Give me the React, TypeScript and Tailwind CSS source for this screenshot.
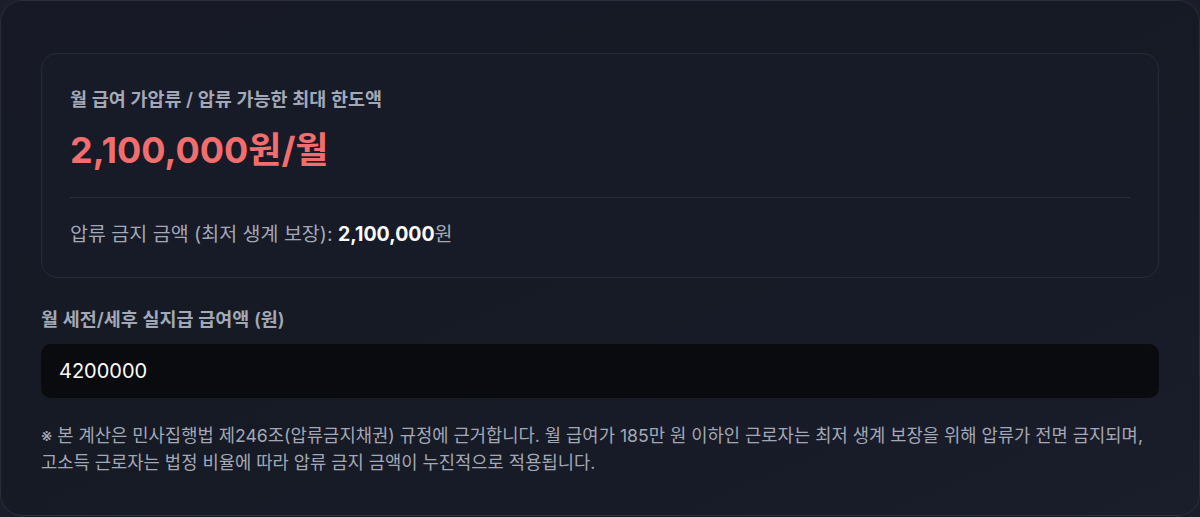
import React, { useState } from 'react';

const font = { fontFamily: 'Inter, "Noto Sans CJK KR", sans-serif' };

const App: React.FC = () => {
  const [salary, setSalary] = useState('4200000');

  return (
    <div className="min-h-screen bg-[#1b1e2a]" style={font}>
      <div className="h-[516px] rounded-[22px] border border-[#2a2e3c] bg-gradient-to-br from-[#171a26] via-[#161a25] to-[#1a1d2a] px-10 pt-[52px]">
        {/* result card */}
        <div className="rounded-2xl border border-[#272b39] bg-[#171a27] px-7 pt-[31px] pb-[29px]">
          <div className="text-[18.5px] font-semibold leading-7 text-[#a3a8b6]">
            월 급여 가압류 / 압류 가능한 최대 한도액
          </div>
          <div className="mt-[17px] text-[36px] font-bold leading-10 text-[#f26d6d]">
            2,100,000원/월
          </div>
          <div className="mt-[27px] border-t border-[#2a2e3c] pt-[22px] text-[19.5px] leading-7 text-[#a3a8b6]">
            압류 금지 금액 (최저 생계 보장):{' '}
            <span className="font-bold text-white">2,100,000</span>원
          </div>
        </div>

        <label className="mt-[27px] block text-[18.5px] font-semibold leading-7 text-[#a3a8b6]">
          월 세전/세후 실지급 급여액 (원)
        </label>
        <input
          value={salary}
          onChange={(e) => setSalary(e.target.value)}
          className="mt-[11px] block h-[54px] w-full rounded-[10px] bg-[#0a0b0e] px-[18px] text-xl text-white outline-none"
        />

        <p className="mt-6 break-keep text-[17.7px] leading-[27px] text-[#a3a8b6]">
          ※ 본 계산은 민사집행법 제246조(압류금지채권) 규정에 근거합니다. 월 급여가 185만 원 이하인 근로자는 최저 생계 보장을 위해 압류가 전면 금지되며,
          고소득 근로자는 법정 비율에 따라 압류 금지 금액이 누진적으로 적용됩니다.
        </p>
      </div>
    </div>
  );
};

export default App;
